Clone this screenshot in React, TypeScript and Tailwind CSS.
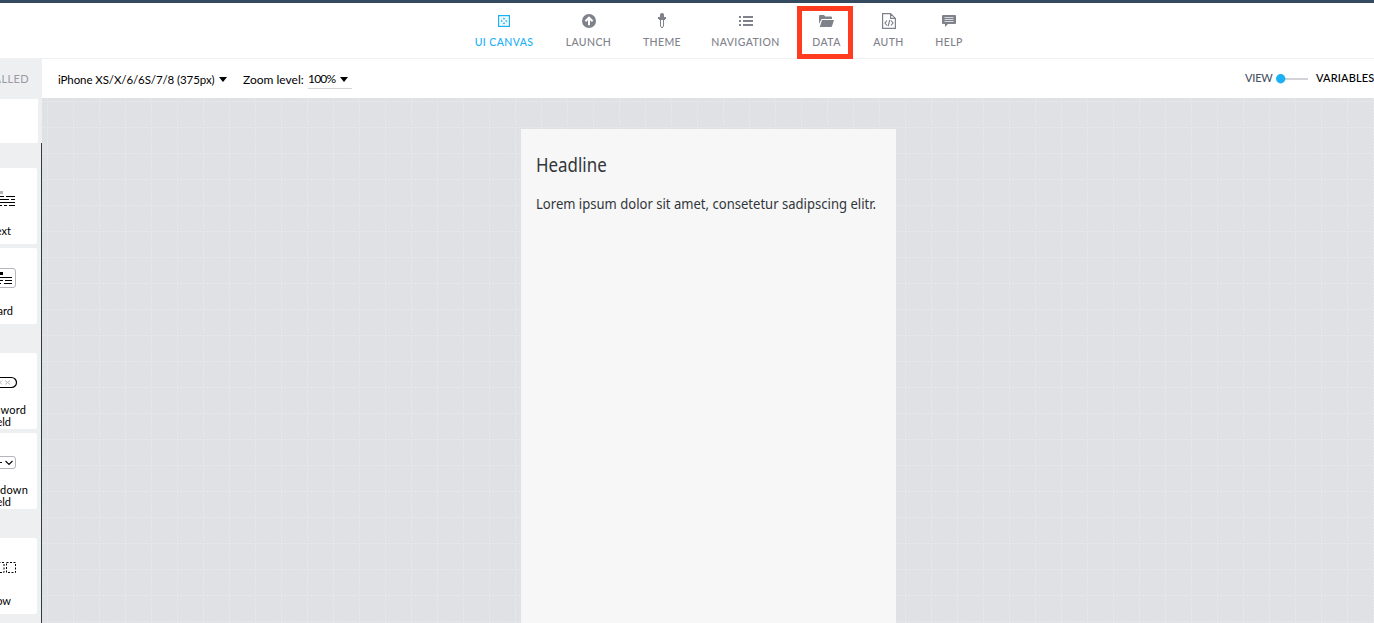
import React from 'react';

type TabProps = { label: string; x: string; w: string; active?: boolean; boxed?: boolean; children: React.ReactNode };

function Tab({ label, x, w, active, boxed, children }: TabProps) {
  return (
    <div className={`${x} ${w} flex shrink-0 flex-col items-center ${boxed ? 'mt-[3px] h-[53px] border-[5px] border-[#ff3c1f] pt-[2px] pl-[3px]' : 'pt-[10px]'} ${active ? 'text-[#1cb0f6]' : 'text-[#7f828b]'}`}>
      <div className="flex h-4 items-center justify-center">{children}</div>
      <span className="mt-1.5 text-[10.5px] leading-[14px] font-medium tracking-[0.4px] whitespace-nowrap">{label}</span>
    </div>
  );
}

function Tile({ gap, tall, icon, lines }: { gap: string; tall?: boolean; icon: React.ReactNode; lines: { t: string; w: string; ls: string }[] }) {
  return (
    <div className={`${gap} flex h-[76px] w-[37px] shrink-0 flex-col rounded-r-[2px] bg-white`}>
      <div className={`${tall ? 'h-[51px]' : 'h-[57px]'} shrink-0`}>{icon}</div>
      {lines.map((l) => (
        <div key={l.t} className={`flex h-3 shrink-0 justify-end text-[11px] leading-3 whitespace-nowrap ${l.w}`}>
          <span className={l.ls}>{l.t}</span>
        </div>
      ))}
    </div>
  );
}

const Caret = ({ className }: { className: string }) => (
  <svg className={`shrink-0 ${className}`} width="8" height="5" viewBox="0 0 8 5"><path d="M0 0h8L4 5z" fill="#000" /></svg>
);

export default function App() {
  return (
    <div className="flex h-[623px] w-[1374px] flex-col overflow-hidden bg-white font-['Lato','Liberation_Sans',sans-serif] text-black">
      <header className="flex h-[59px] shrink-0 items-start border-t-[3px] border-b border-t-[#354a5f] border-b-[#f1f1f2]">
        <Tab label="UI CANVAS" x="ml-[474px]" w="w-[60px]" active>
          <svg width="12" height="12" viewBox="0 0 12 12" fill="none" stroke="currentColor">
            <path d="M.6.6h10.8v10.8H.6z" strokeWidth="1.2" />
            <path d="M6 3v1.5M6 7.5V9M3 6h1.5M7.5 6H9" strokeWidth="1.6" />
            <path d="M3 3h6v6H3z" strokeWidth="1" strokeDasharray="1 1" strokeOpacity=".35" />
          </svg>
        </Tab>
        <Tab label="LAUNCH" x="ml-[31px]" w="w-[47px]">
          <svg width="14" height="14" viewBox="0 0 14 14"><circle cx="7" cy="7" r="7" fill="currentColor" /><path d="M7 11.2V4M3.4 7.2 7 3.7l3.6 3.5" fill="none" stroke="#fff" strokeWidth="2" /></svg>
        </Tab>
        <Tab label="THEME" x="ml-[31px]" w="w-[38px]">
          <svg width="8" height="16" viewBox="0 0 8 16"><path d="M2 4V1.5Q2 0 4 0t2 1.5V4h2v2H7v1H1V6H0V4z" fill="currentColor" /><path d="M2.5 6v7L4 15l1.5-2V6" fill="none" stroke="currentColor" /></svg>
        </Tab>
        <Tab label="NAVIGATION" x="ml-[30px]" w="w-[69px]">
          <svg width="14" height="10" viewBox="0 0 14 10" fill="currentColor"><path d="M0 0h2v2H0zM4 0h10v2H4zM0 4h2v2H0zM4 4h10v2H4zM0 8h2v2H0zM4 8h10v2H4z" /></svg>
        </Tab>
        <Tab label="DATA" x="ml-[17px]" w="w-[56px]" boxed>
          <svg width="15" height="12" viewBox="0 0 15 12" fill="currentColor"><path d="M0 9V1q0-1 1-1h4l1.3 1.5H12q1 0 1 1V4H3.2Q2.3 4 2 5zM3 5h12l-2 6.2q-.2.8-1 .8H.8z" /></svg>
        </Tab>
        <Tab label="AUTH" x="ml-[20px]" w="w-[31px]">
          <svg width="14" height="16" viewBox="0 0 14 16" fill="none" stroke="currentColor" strokeWidth="1.2"><path d="M.6.6h8l4.8 4.8v10H.6zM8.6.6v4.8h4.8M5 7.5 3 10l2 2.5M9 7.5l2 2.5-2 2.5M7.8 6.8l-1.6 6.4" /></svg>
        </Tab>
        <Tab label="HELP" x="ml-[31px]" w="w-[28px]">
          <svg width="14" height="12" viewBox="0 0 14 12"><path d="M1 0h12q1 0 1 1v7q0 1-1 1H6l-3 3V9H1Q0 9 0 8V1q0-1 1-1z" fill="currentColor" /><path d="M2.5 2.5h9M2.5 4.5h9M2.5 6.5h9" stroke="#fff" strokeWidth=".7" /></svg>
        </Tab>
      </header>

      <div className="flex min-h-0 grow">
        <aside className="flex w-[42px] shrink-0 flex-col overflow-hidden bg-[#eeeff1]">
          <div className="flex h-[40px] w-[29px] shrink-0 items-center justify-end text-[11px] text-[#989ba3]"><span className="tracking-[0.4px]">INSTALLED</span></div>
          <div className="h-[44px] w-[38px] shrink-0 rounded-br-[2px] bg-white" />
          <div className="flex h-[480px] shrink-0 flex-col border-r border-[#2f3c48]">
            <Tile gap="mt-[25px]" icon={<svg width="37" height="57"><path d="M0 23h3v3H0z" fill="#b4b5bb" /><path d="M0 28.5h4m2 0h9M0 31.5h9m2 0h4M0 34.5h15M0 37.5h2m2 0h3m2 0h6" stroke="#000" /></svg>} lines={[{ t: 'Text', w: 'w-[11px]', ls: '' }]} />
            <Tile gap="mt-1" icon={<svg width="37" height="57"><rect x="-8" y="20.5" width="23.5" height="19" rx="2.5" fill="#fff" stroke="#b4b5bb" /><path d="M0 24h3v3H0z" /><path d="M0 29.5h12M0 32.5h3m2 0h7M0 35.5h1m3 0h8" stroke="#000" /></svg>} lines={[{ t: 'Card', w: 'w-[13px]', ls: '' }]} />
            <Tile gap="mt-[29px]" tall icon={<svg width="37" height="51"><rect x="-12" y="24.5" width="28.5" height="10" rx="5" fill="none" stroke="#000" strokeWidth="1.2" /><path d="m-2 27.5 4 4m0-4-4 4m7-4 5 4m0-4-5 4" stroke="#b4b5bb" fill="none" /></svg>} lines={[{ t: 'Password', w: 'w-[26px]', ls: 'tracking-[0.2px]' }, { t: 'field', w: 'w-[11px]', ls: '' }]} />
            <Tile gap="mt-1" tall icon={<svg width="37" height="51"><rect x="-12" y="23.5" width="27.5" height="12" rx="2.5" fill="none" stroke="#b4b5bb" /><path d="M0 29.5h2M5.5 28l3.5 3.5 3.5-3.5" stroke="#111" strokeWidth="1.2" fill="none" /></svg>} lines={[{ t: 'Dropdown', w: 'w-[28px]', ls: 'tracking-[0.2px]' }, { t: 'field', w: 'w-[11px]', ls: '' }]} />
            <Tile gap="mt-[29px]" icon={<svg width="37" height="57"><path d="M-5 24.5h9v10h-9M6.5 24.5h9v10h-9z" fill="none" stroke="#000" strokeDasharray="2 1.5" /></svg>} lines={[{ t: 'Row', w: 'w-[11px]', ls: '' }]} />
          </div>
        </aside>

        <section className="flex w-[1332px] shrink-0 flex-col">
          <div className="flex h-[39px] shrink-0 items-center text-[12px]">
            <span className="mt-0.5 ml-4 w-[157px] shrink-0 text-[11.5px] tracking-[-0.09px] whitespace-nowrap">iPhone XS/X/6/6S/7/8 (375px)</span>
            <Caret className="mt-0.5 ml-1" />
            <span className="mt-[3px] ml-4 w-[61px] shrink-0 whitespace-nowrap">Zoom level:</span>
            <div className="ml-1 flex h-[21px] w-[44px] shrink-0 items-center border-b border-[#d3d4d8] pt-0.5">
              <span className="w-[29px] shrink-0 tracking-[-0.8px]">100%</span><Caret className="ml-[3px]" />
            </div>
            <span className="ml-[893px] w-[27px] shrink-0 text-[11px] font-medium tracking-[-0.2px] text-[#475064]">VIEW</span>
            <svg className="ml-1 shrink-0" width="32" height="10"><path d="M8 5h24" stroke="#d2d3d7" strokeWidth="2" /><circle cx="4.7" cy="4.7" r="4.7" fill="#1cb0f6" /></svg>
            <span className="ml-[8px] shrink-0 text-[11px] font-medium tracking-[0.15px]">VARIABLES</span>
          </div>
          <main className="relative flex grow justify-start bg-[#e0e1e5]">
            <svg className="absolute inset-0" width="1332" height="525">
              <defs><pattern id="grid" x="5" y="3" width="26" height="26" patternUnits="userSpaceOnUse"><path d="M.5 0v26M0 .5h26" stroke="#e7e8eb" strokeDasharray="2 1.25" /></pattern></defs>
              <rect width="1332" height="525" fill="url(#grid)" />
            </svg>
            <article className="relative mt-[31px] ml-[479px] w-[375px] bg-[#f7f7f7] pl-[15px] font-['Noto_Sans',sans-serif] text-[#32363a]">
              <h1 className="mt-[24px] w-max origin-left scale-x-[0.89] text-[19px] leading-6">Headline</h1>
              <p className="mt-[17px] w-max origin-left scale-x-[0.933] text-[14px] leading-5 whitespace-nowrap">Lorem ipsum dolor sit amet, consetetur sadipscing elitr.</p>
            </article>
          </main>
        </section>
      </div>
    </div>
  );
}
